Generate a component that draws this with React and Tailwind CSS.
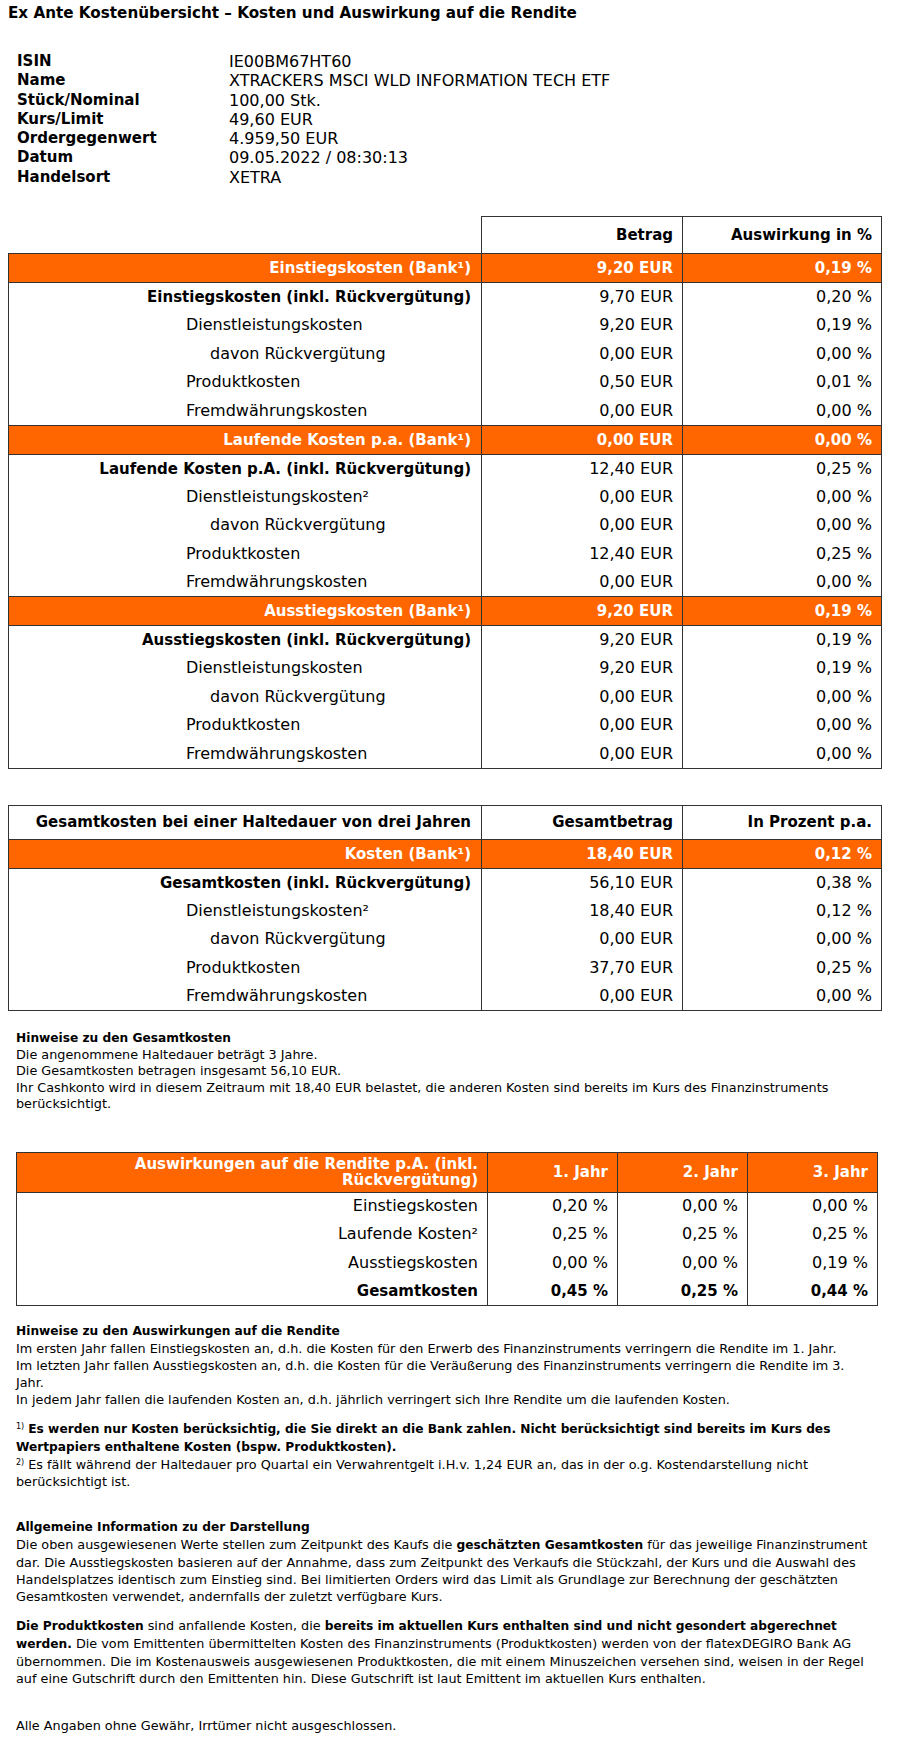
import React from "react";

const info = [
  ["ISIN", "IE00BM67HT60"],
  ["Name", "XTRACKERS MSCI WLD INFORMATION TECH ETF"],
  ["Stück/Nominal", "100,00 Stk."],
  ["Kurs/Limit", "49,60 EUR"],
  ["Ordergegenwert", "4.959,50 EUR"],
  ["Datum", "09.05.2022 / 08:30:13"],
  ["Handelsort", "XETRA"],
];

const sections = [
  {
    bank: ["Einstiegskosten (Bank¹)", "9,20 EUR", "0,19 %"],
    sub: ["Einstiegskosten (inkl. Rückvergütung)", "9,70 EUR", "0,20 %"],
    items: [
      ["Dienstleistungskosten", "9,20 EUR", "0,19 %", 1],
      ["davon Rückvergütung", "0,00 EUR", "0,00 %", 2],
      ["Produktkosten", "0,50 EUR", "0,01 %", 1],
      ["Fremdwährungskosten", "0,00 EUR", "0,00 %", 1],
    ],
  },
  {
    bank: ["Laufende Kosten p.a. (Bank¹)", "0,00 EUR", "0,00 %"],
    sub: ["Laufende Kosten p.A. (inkl. Rückvergütung)", "12,40 EUR", "0,25 %"],
    items: [
      ["Dienstleistungskosten²", "0,00 EUR", "0,00 %", 1],
      ["davon Rückvergütung", "0,00 EUR", "0,00 %", 2],
      ["Produktkosten", "12,40 EUR", "0,25 %", 1],
      ["Fremdwährungskosten", "0,00 EUR", "0,00 %", 1],
    ],
  },
  {
    bank: ["Ausstiegskosten (Bank¹)", "9,20 EUR", "0,19 %"],
    sub: ["Ausstiegskosten (inkl. Rückvergütung)", "9,20 EUR", "0,19 %"],
    items: [
      ["Dienstleistungskosten", "9,20 EUR", "0,19 %", 1],
      ["davon Rückvergütung", "0,00 EUR", "0,00 %", 2],
      ["Produktkosten", "0,00 EUR", "0,00 %", 1],
      ["Fremdwährungskosten", "0,00 EUR", "0,00 %", 1],
    ],
  },
];

const total = {
  bank: ["Kosten (Bank¹)", "18,40 EUR", "0,12 %"],
  sub: ["Gesamtkosten (inkl. Rückvergütung)", "56,10 EUR", "0,38 %"],
  items: [
    ["Dienstleistungskosten²", "18,40 EUR", "0,12 %", 1],
    ["davon Rückvergütung", "0,00 EUR", "0,00 %", 2],
    ["Produktkosten", "37,70 EUR", "0,25 %", 1],
    ["Fremdwährungskosten", "0,00 EUR", "0,00 %", 1],
  ],
};

const rendite = [
  ["Einstiegskosten", "0,20 %", "0,00 %", "0,00 %"],
  ["Laufende Kosten²", "0,25 %", "0,25 %", "0,25 %"],
  ["Ausstiegskosten", "0,00 %", "0,00 %", "0,19 %"],
];

const cellX = "border-x border-[#333]";

function Section({ data, last }) {
  return (
    <>
      <tr className="h-[29px] bg-[#ff6600] text-white font-bold text-[15px] border-y border-[#333]">
        <td className={`${cellX} text-right pr-[10px]`}>{data.bank[0]}</td>
        <td className={`${cellX} text-right pr-[9px]`}>{data.bank[1]}</td>
        <td className={`${cellX} text-right pr-[9px]`}>{data.bank[2]}</td>
      </tr>
      <tr className="h-[28.5px] text-[16px]">
        <td className={`${cellX} text-right pr-[10px] font-bold text-[15px]`}>{data.sub[0]}</td>
        <td className={`${cellX} text-right pr-[9px]`}>{data.sub[1]}</td>
        <td className={`${cellX} text-right pr-[9px]`}>{data.sub[2]}</td>
      </tr>
      {data.items.map((it, i) => (
        <tr
          key={i}
          className={`h-[28.5px] text-[16px] ${last && i === data.items.length - 1 ? "border-b border-[#333]" : ""}`}
        >
          <td className={`${cellX} ${it[3] === 2 ? "pl-[201px]" : "pl-[177px]"}`}>{it[0]}</td>
          <td className={`${cellX} text-right pr-[9px]`}>{it[1]}</td>
          <td className={`${cellX} text-right pr-[9px]`}>{it[2]}</td>
        </tr>
      ))}
    </>
  );
}

function Cols() {
  return (
    <colgroup>
      <col className="w-[473px]" />
      <col className="w-[201px]" />
      <col className="w-[199px]" />
    </colgroup>
  );
}

function B({ children }) {
  return <b className="text-[12.2px]">{children}</b>;
}

export default function App() {
  return (
    <div className="w-[906px] min-h-[1737px] bg-white text-black font-['DejaVu_Sans',sans-serif]">
      <h1 className="pl-[8px] pt-[4px] text-[15.2px] font-bold leading-[18px]">
        Ex Ante Kostenübersicht – Kosten und Auswirkung auf die Rendite
      </h1>

      <div className="mt-[30px] ml-[17px] grid grid-cols-[212px_1fr] leading-[19.3px]">
        {info.map(([k, v]) => (
          <React.Fragment key={k}>
            <div className="text-[15px] font-bold">{k}</div>
            <div className="text-[16px]">{v}</div>
          </React.Fragment>
        ))}
      </div>

      <table className="mt-[29px] ml-[8px] w-[873px] table-fixed border-collapse leading-[18px]">
        <Cols />
        <tbody>
          <tr className="h-[37px] text-[15px] font-bold">
            <td></td>
            <td className="border border-[#333] text-right pr-[9px]">Betrag</td>
            <td className="border border-[#333] text-right pr-[9px]">Auswirkung in %</td>
          </tr>
          {sections.map((s, i) => (
            <Section key={i} data={s} last={i === sections.length - 1} />
          ))}
        </tbody>
      </table>

      <table className="mt-[36px] ml-[8px] w-[873px] table-fixed border-collapse leading-[18px]">
        <Cols />
        <tbody>
          <tr className="h-[34px] text-[15px] font-bold">
            <td className="border border-[#333] text-right pr-[10px]">
              Gesamtkosten bei einer Haltedauer von drei Jahren
            </td>
            <td className="border border-[#333] text-right pr-[9px]">Gesamtbetrag</td>
            <td className="border border-[#333] text-right pr-[9px]">In Prozent p.a.</td>
          </tr>
          <Section data={total} last />
        </tbody>
      </table>

      <div className="mt-[19px] ml-[16px] text-[12.8px] leading-[16.5px] whitespace-nowrap">
        <p className="font-bold text-[12.2px]">Hinweise zu den Gesamtkosten</p>
        <p>
          Die angenommene Haltedauer beträgt 3 Jahre.
          <br />
          Die Gesamtkosten betragen insgesamt 56,10 EUR.
          <br />
          Ihr Cashkonto wird in diesem Zeitraum mit 18,40 EUR belastet, die anderen Kosten sind bereits im Kurs des Finanzinstruments
          <br />
          berücksichtigt.
        </p>
      </div>

      <table className="mt-[39px] ml-[16px] w-[861px] table-fixed border-collapse border border-[#333] leading-[18px]">
        <colgroup>
          <col className="w-[471px]" />
          <col className="w-[130px]" />
          <col className="w-[130px]" />
          <col className="w-[130px]" />
        </colgroup>
        <tbody>
          <tr className="h-[40px] bg-[#ff6600] text-white font-bold text-[15px] border-b border-[#333]">
            <td className={`${cellX} text-right pr-[9px] leading-[16px]`}>
              Auswirkungen auf die Rendite p.A. (inkl.
              <br />
              Rückvergütung)
            </td>
            <td className={`${cellX} text-right pr-[9px]`}>1. Jahr</td>
            <td className={`${cellX} text-right pr-[9px]`}>2. Jahr</td>
            <td className={`${cellX} text-right pr-[9px]`}>3. Jahr</td>
          </tr>
          {rendite.map((r) => (
            <tr key={r[0]} className="h-[28.25px] text-[16px]">
              {r.map((c, j) => (
                <td key={j} className={`${cellX} text-right pr-[9px]`}>
                  {c}
                </td>
              ))}
            </tr>
          ))}
          <tr className="h-[28.25px] text-[15px] font-bold">
            {["Gesamtkosten", "0,45 %", "0,25 %", "0,44 %"].map((c, j) => (
              <td key={j} className={`${cellX} text-right pr-[9px]`}>
                {c}
              </td>
            ))}
          </tr>
        </tbody>
      </table>

      <div className="ml-[16px] text-[12.8px] leading-[17px] whitespace-nowrap">
        <p className="mt-[17.5px] font-bold text-[12.2px]">Hinweise zu den Auswirkungen auf die Rendite</p>
        <p>
          Im ersten Jahr fallen Einstiegskosten an, d.h. die Kosten für den Erwerb des Finanzinstruments verringern die Rendite im 1. Jahr.
          <br />
          Im letzten Jahr fallen Ausstiegskosten an, d.h. die Kosten für die Veräußerung des Finanzinstruments verringern die Rendite im 3.
          <br />
          Jahr.
          <br />
          In jedem Jahr fallen die laufenden Kosten an, d.h. jährlich verringert sich Ihre Rendite um die laufenden Kosten.
        </p>

        <p className="mt-[12px]">
          <sup className="text-[8px]">1)</sup>{" "}
          <B>
            Es werden nur Kosten berücksichtig, die Sie direkt an die Bank zahlen. Nicht berücksichtigt sind bereits im Kurs des
            <br />
            Wertpapiers enthaltene Kosten (bspw. Produktkosten).
          </B>
          <br />
          <sup className="text-[8px]">2)</sup> Es fällt während der Haltedauer pro Quartal ein Verwahrentgelt i.H.v. 1,24 EUR an, das in der o.g. Kostendarstellung nicht
          <br />
          berücksichtigt ist.
        </p>

        <p className="mt-[29px] font-bold text-[12.2px]">Allgemeine Information zu der Darstellung</p>
        <p>
          Die oben ausgewiesenen Werte stellen zum Zeitpunkt des Kaufs die <B>geschätzten Gesamtkosten</B> für das jeweilige Finanzinstrument
          <br />
          dar. Die Ausstiegskosten basieren auf der Annahme, dass zum Zeitpunkt des Verkaufs die Stückzahl, der Kurs und die Auswahl des
          <br />
          Handelsplatzes identisch zum Einstieg sind. Bei limitierten Orders wird das Limit als Grundlage zur Berechnung der geschätzten
          <br />
          Gesamtkosten verwendet, andernfalls der zuletzt verfügbare Kurs.
        </p>

        <p className="mt-[12px]">
          <B>Die Produktkosten</B> sind anfallende Kosten, die <B>bereits im aktuellen Kurs enthalten sind und nicht gesondert abgerechnet</B>
          <br />
          <B>werden.</B> Die vom Emittenten übermittelten Kosten des Finanzinstruments (Produktkosten) werden von der flatexDEGIRO Bank AG
          <br />
          übernommen. Die im Kostenausweis ausgewiesenen Produktkosten, die mit einem Minuszeichen versehen sind, weisen in der Regel
          <br />
          auf eine Gutschrift durch den Emittenten hin. Diese Gutschrift ist laut Emittent im aktuellen Kurs enthalten.
        </p>

        <p className="mt-[30px]">Alle Angaben ohne Gewähr, Irrtümer nicht ausgeschlossen.</p>
      </div>
    </div>
  );
}
